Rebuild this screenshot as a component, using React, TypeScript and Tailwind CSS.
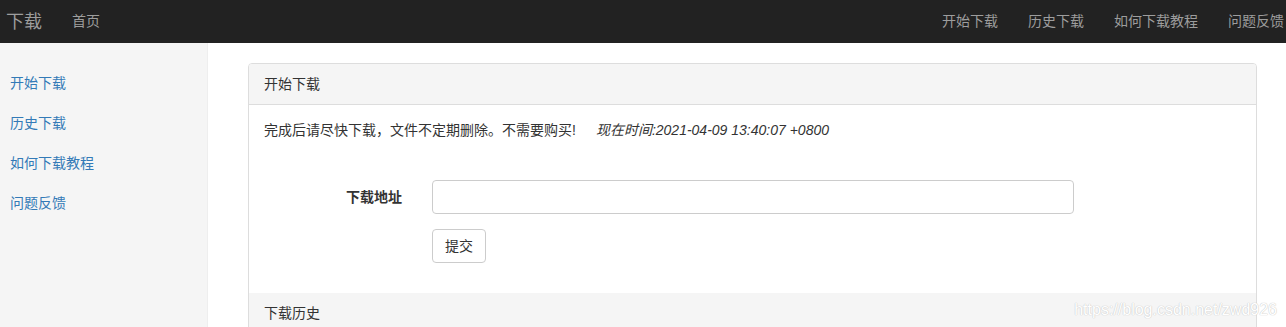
const font = { fontFamily: '"Liberation Sans", "Noto Sans CJK SC", sans-serif' };

const navItems = ["开始下载", "历史下载", "如何下载教程", "问题反馈"];

function Navbar() {
    return <div className="h-[43px] bg-[#222222] flex items-center text-[#9d9d9d]">
        <div className="pl-[6px] text-[18px] leading-none">下载</div>
        <div className="pl-[30px] text-[14px]">首页</div>
        <div className="ml-auto flex pr-[2px] text-[14px]">
            {navItems.map((t, i) => (
                <span key={t} className={i === 0 ? "" : "ml-[30px]"}>{t}</span>
            ))}
        </div>
    </div>
}

function Sidebar() {
    return <div className="w-[208px] shrink-0 bg-[#f5f5f5] border-r border-[#eeeeee] pt-[30px] pl-[10px] text-[14px] text-[#337ab7]">
        {navItems.map(t => (
            <div key={t} className="h-[40px] leading-[20px]">{t}</div>
        ))}
    </div>
}

export default function App() {
    return <div style={font} className="w-[1286px] h-[327px] overflow-hidden text-[14px] text-[#333333] bg-white relative">
        <Navbar/>
        <div className="flex h-[284px]">
            <Sidebar/>
            <div className="flex-1 pt-[20px] pl-[40px] pr-[29px]">
                <div className="border border-[#dddddd] rounded-[4px] overflow-hidden">
                    <div className="h-[41px] bg-[#f5f5f5] border-b border-[#dddddd] px-[15px] leading-[40px]">开始下载</div>
                    <div className="px-[15px] pt-[15px] pb-[30px]">
                        <div className="leading-[20px]">
                            完成后请尽快下载，文件不定期删除。不需要购买!
                            <i className="ml-[20px]">现在时间:2021-04-09 13:40:07 +0800</i>
                        </div>
                        <div className="mt-[40px] flex items-center">
                            <label className="w-[138px] text-right font-bold">下载地址</label>
                            <input className="ml-[30px] w-[642px] h-[34px] border border-[#cccccc] rounded-[4px] px-3 outline-none" />
                        </div>
                        <div className="mt-[15px] ml-[168px]">
                            <button className="h-[34px] px-[12px] border border-[#cccccc] rounded-[4px] bg-white">提交</button>
                        </div>
                    </div>
                    <div className="h-[40px] bg-[#f5f5f5] px-[15px] leading-[40px]">下载历史</div>
                </div>
            </div>
        </div>
        <div className="absolute right-[9px] bottom-[5px] text-[16px] text-white pointer-events-none" style={{ fontFamily: '"Liberation Sans", sans-serif', textShadow: "0 0 1px #c8c8c8, 0 0 1px #c8c8c8" }}>https://blog.csdn.net/zwd926</div>
    </div>
}
